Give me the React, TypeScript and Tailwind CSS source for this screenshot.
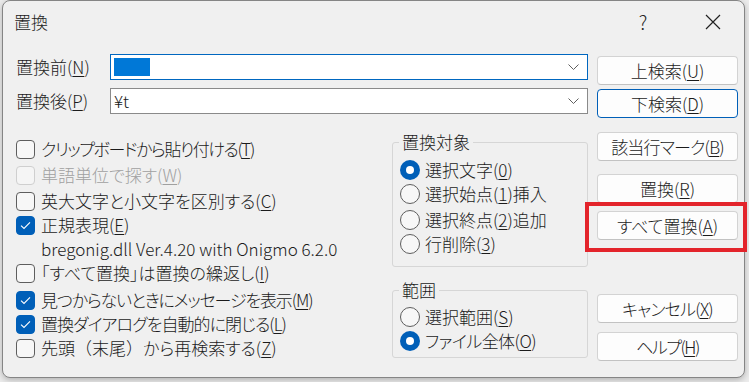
import React from 'react';
import clsx from 'clsx';

// access key letter, underlined like the Win32 mnemonic
function K({ c }: { c: string }) {
  return <u className="underline-offset-[2px]">{c}</u>;
}

function Check({ checked, disabled, className, textClass, children }: { checked?: boolean; disabled?: boolean; className?: string; textClass?: string; children: React.ReactNode }) {
  return (
    <div className={clsx('flex h-[24px] items-center gap-[6px]', className)}>
      <span
        className={clsx(
          'flex h-[19px] w-[19px] shrink-0 items-center justify-center rounded-[4px] border',
          checked ? 'border-[#005fb8] bg-[#005fb8]' : disabled ? 'border-[#cfcfcf] bg-[#f5f5f5]' : 'border-[#5e5e5e] bg-[#f7f7f7]'
        )}
      >
        {checked && (
          <svg width="11" height="9" viewBox="0 0 11 9">
            <path d="M1 4.6 L4 7.4 L10 1.4" stroke="white" strokeWidth="1.1" fill="none" />
          </svg>
        )}
      </span>
      <span className={clsx('whitespace-nowrap', disabled && 'text-[#a0a0a0]', textClass)}>{children}</span>
    </div>
  );
}

function Radio({ checked, className, textClass, children }: { checked?: boolean; className?: string; textClass?: string; children: React.ReactNode }) {
  return (
    <div className={clsx('flex h-[24px] items-center gap-[5px]', className)}>
      {checked ? (
        <span className="flex h-[20px] w-[20px] shrink-0 items-center justify-center rounded-full bg-[#005fb8]">
          <span className="h-[8px] w-[8px] rounded-full bg-white" />
        </span>
      ) : (
        <span className="h-[20px] w-[20px] shrink-0 rounded-full border border-[#5e5e5e] bg-[#f7f7f7]" />
      )}
      <span className={clsx('whitespace-nowrap', textClass)}>{children}</span>
    </div>
  );
}

function Btn({ primary, className, textClass, children }: { primary?: boolean; className?: string; textClass?: string; children: React.ReactNode }) {
  return (
    <div
      className={clsx(
        'flex h-[29px] w-[141px] items-center justify-center rounded-[4px] border bg-[#fdfdfd]',
        primary ? 'border-[#005fb8]' : 'border-[#d3d3d3] border-b-[#c2c2c2]',
        className
      )}
    >
      <span className={clsx('whitespace-nowrap', textClass)}>{children}</span>
    </div>
  );
}

function Chevron() {
  return (
    <svg width="11" height="6" viewBox="0 0 11 6" className="shrink-0">
      <path d="M0.5 0.5 L5.5 5.5 L10.5 0.5" stroke="#5f5f5f" strokeWidth="1" fill="none" />
    </svg>
  );
}

export default function App() {
  return (
    <div className="h-[382px] w-[749px] overflow-hidden bg-[#ececec] pl-[2px] font-['Noto_Sans_CJK_JP',sans-serif] text-[17px] font-light text-[#1b1b1b] [font-feature-settings:'palt']">
      <div className="h-[378px] w-[743px] rounded-[8px] border border-[#858585] bg-[#f0f0f0] shadow-[0_2px_6px_rgba(0,0,0,0.25)]">
        {/* title bar */}
        <div className="flex h-[41px] items-center pl-[11px] pr-[8px]">
          <span>置換</span>
          <div className="flex-1" />
          <span className="flex w-[46px] justify-center text-[19px] leading-none text-[#222]">?</span>
          <div className="w-[24px]" />
          <span className="flex w-[46px] justify-center">
            <svg width="16" height="16" viewBox="0 0 16 16">
              <path d="M1 1 L15 15 M15 1 L1 15" stroke="#222" strokeWidth="1.2" />
            </svg>
          </span>
        </div>

        <div className="flex pl-[13px]">
          <div className="w-[572px]">
            <div className="mt-[12px] flex h-[26px] items-center">
              <span className="w-[94px] whitespace-nowrap">置換前(<K c="N" />)</span>
              <div className="flex h-[26px] flex-1 items-center border border-[#0067c0] bg-white pl-[3px] pr-[8px]">
                <div className="h-[18px] w-[36px] bg-[#0078d7]" />
                <div className="flex-1" />
                <Chevron />
              </div>
            </div>
            <div className="mt-[8px] flex h-[26px] items-center">
              <span className="w-[94px] whitespace-nowrap">置換後(<K c="P" />)</span>
              <div className="flex h-[26px] flex-1 items-center border border-[#8a8a8a] bg-white pl-[3px] pr-[8px]">
                <span className="[font-feature-settings:normal]">¥t</span>
                <div className="flex-1" />
                <Chevron />
              </div>
            </div>

            <div className="mt-[17px] flex">
              <div className="w-[376px] pt-[6px]">
                <Check textClass="tracking-[-1.4px]">クリップボードから貼り付ける(<K c="T" />)</Check>
                <Check disabled className="mt-[2px]">単語単位で探す(<K c="W" />)</Check>
                <Check className="mt-[2px]">英大文字と小文字を区別する(<K c="C" />)</Check>
                <Check checked>正規表現(<K c="E" />)</Check>
                <div className="flex h-[24px] items-center whitespace-nowrap pl-[25px]">bregonig.dll Ver.4.20 with Onigmo 6.2.0</div>
                <Check>「すべて置換」は置換の繰返し(<K c="I" />)</Check>
                <Check checked className="mt-[3px]" textClass="tracking-[-1.15px]">見つからないときにメッセージを表示(<K c="M" />)</Check>
                <Check checked textClass="tracking-[-0.95px]">置換ダイアログを自動的に閉じる(<K c="L" />)</Check>
                <Check>
                  先頭<span className="[font-feature-settings:normal]">（</span>末尾<span className="[font-feature-settings:normal]">）</span>から再検索する(<K c="Z" />)
                </Check>
              </div>

              <div className="w-[196px]">
                <fieldset className="h-[136px] rounded-[3px] border border-[#d6d6d6] pl-[7px]">
                  <legend className="-ml-[1px] px-[3px] leading-[22px]">置換対象</legend>
                  <Radio checked className="mt-[5px]">選択文字(<K c="0" />)</Radio>
                  <Radio>選択始点(<K c="1" />)挿入</Radio>
                  <Radio className="mt-[2px]">選択終点(<K c="2" />)追加</Radio>
                  <Radio>行削除(<K c="3" />)</Radio>
                </fieldset>
                <fieldset className="mt-[12px] h-[79px] rounded-[3px] border border-[#d6d6d6] pl-[7px]">
                  <legend className="-ml-[1px] px-[3px] leading-[22px]">範囲</legend>
                  <Radio className="mt-[4px]">選択範囲(<K c="S" />)</Radio>
                  <Radio checked textClass="tracking-[-0.55px]">ファイル全体(<K c="O" />)</Radio>
                </fieldset>
              </div>
            </div>
          </div>

          <div className="ml-[9px] flex flex-col">
            <Btn className="mt-[14px]">上検索(<K c="U" />)</Btn>
            <Btn primary className="mt-[4px]">下検索(<K c="D" />)</Btn>
            <Btn className="mt-[14px]" textClass="tracking-[-0.8px]">該当行マーク(<K c="B" />)</Btn>
            <Btn className="mt-[13px]">置換(<K c="R" />)</Btn>
            <div className="relative mt-[8px]">
              <Btn>すべて置換(<K c="A" />)</Btn>
              <div className="pointer-events-none absolute -left-[12px] -top-[9px] h-[50px] w-[162px] border-[4px] border-[#e3242b]" />
            </div>
            <Btn className="mt-[54px]" textClass="tracking-[-0.75px]">キャンセル(<K c="X" />)</Btn>
            <Btn className="mt-[9px]" textClass="tracking-[-1.5px]">ヘルプ(<K c="H" />)</Btn>
          </div>
        </div>
      </div>
    </div>
  );
}
